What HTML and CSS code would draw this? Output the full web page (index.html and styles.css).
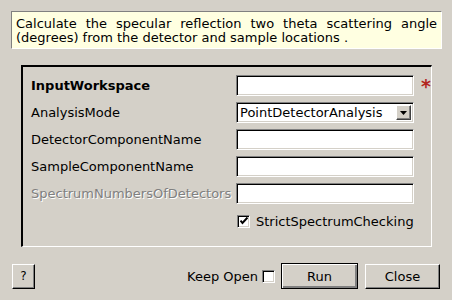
FILE: index.html
```html
<!DOCTYPE html>
<html>
<head>
    <meta charset="utf-8">
    <title>Input Dialog</title>
    <link rel="stylesheet" href="styles.css">
</head>
<body>
    <div class="desc">Calculate the specular reflection two theta scattering angle (degrees) from the detector and sample locations .</div>

    <div class="group">
        <div class="label bold">InputWorkspace</div>
        <div class="field"></div>
        <div class="req">*</div>

        <div class="label">AnalysisMode</div>
        <div class="field combo">
            <span class="combo-text">PointDetectorAnalysis</span>
            <span class="combo-btn"><svg width="7" height="4" viewBox="0 0 7 4"><path d="M0 0h7L3.5 4z" fill="#000"/></svg></span>
        </div>
        <div></div>

        <div class="label">DetectorComponentName</div>
        <div class="field"></div>
        <div></div>

        <div class="label">SampleComponentName</div>
        <div class="field"></div>
        <div></div>

        <div class="label disabled">SpectrumNumbersOfDetectors</div>
        <div class="field"></div>
        <div></div>

        <div></div>
        <div class="check-row">
            <span class="check"><svg width="8" height="8" viewBox="0 0 8 8"><path d="M0.5 3.5l2 2.5l5-5.5" fill="none" stroke="#000" stroke-width="2"/></svg></span>
            <span>StrictSpectrumChecking</span>
        </div>
        <div></div>
    </div>

    <div class="buttons">
        <div class="btn help">?</div>
        <div class="spacer"></div>
        <span class="keep">Keep Open</span>
        <span class="check keep-box"></span>
        <div class="btn run">Run</div>
        <div class="btn close">Close</div>
    </div>
</body>
</html>
```

FILE: styles.css
```css
body {
    margin: 0;
    padding: 11px 11px 0 11px;
    background: #d4d0c8;
    font-family: "DejaVu Sans", sans-serif;
    font-size: 13px;
    color: #000;
}

.desc {
    box-sizing: border-box;
    width: 431px;
    height: 38px;
    padding: 5px 4px 0 4px;
    background: #ffffe1;
    border: 1px solid;
    border-color: #808080 #ffffff #ffffff #808080;
    font-size: 13px;
    line-height: 14px;
    text-align: justify;
}

.group {
    box-sizing: border-box;
    width: 411px;
    height: 182px;
    margin: 16px 0 0 10px;
    padding: 8px 0 0 8px;
    border-style: solid;
    border-width: 2px 1px 1px 2px;
    border-color: #000 #fff #fff #000;
    display: grid;
    grid-template-columns: 205px 178px 16px;
    grid-template-rows: repeat(5, 21px) 20px;
    row-gap: 6px;
}

.label {
    line-height: 21px;
    white-space: nowrap;
}

.bold {
    font-weight: bold;
}

.disabled {
    color: #808080;
    text-shadow: 1px 1px 0 #fff;
}

.field {
    box-sizing: border-box;
    background: #fff;
    border: 1px solid;
    border-color: #808080 #fff #fff #808080;
    box-shadow: inset 1px 1px 0 #000, inset -1px -1px 0 #d4d0c8;
}

.combo {
    display: flex;
    align-items: center;
    padding: 0 2px 0 3px;
}

.combo-text {
    flex: 1;
}

.combo-btn {
    box-sizing: border-box;
    width: 15px;
    height: 15px;
    background: #d4d0c8;
    border: 1px solid;
    border-color: #fff #404040 #404040 #fff;
    box-shadow: inset -1px -1px 0 #808080;
    display: flex;
    align-items: center;
    justify-content: center;
}

.req {
    color: #b3261e;
    font-weight: bold;
    font-size: 19px;
    line-height: 21px;
    padding-left: 7px;
    padding-top: 1px;
}

.check-row {
    display: flex;
    align-items: center;
    gap: 6px;
    padding-left: 1px;
    padding-top: 2px;
}

.check {
    box-sizing: border-box;
    width: 13px;
    height: 13px;
    background: #fff;
    border: 1px solid;
    border-color: #808080 #fff #fff #808080;
    box-shadow: inset 1px 1px 0 #000, inset -1px -1px 0 #d4d0c8;
    display: flex;
    align-items: center;
    justify-content: center;
}

.buttons {
    display: flex;
    align-items: center;
    margin: 16px 1px 0 1px;
}

.spacer {
    flex: 1;
}

.btn {
    box-sizing: border-box;
    height: 25px;
    border: 1px solid;
    border-color: #fff #000 #000 #fff;
    box-shadow: inset -1px -1px 0 #808080;
    display: flex;
    align-items: center;
    justify-content: center;
}

.help {
    width: 23px;
    font-size: 12px;
}

.keep {
    margin-right: 4px;
}

.keep-box {
    margin-right: 6px;
}

.run {
    width: 77px;
    height: 26px;
    border: 1px solid #000;
    box-shadow: inset 1px 1px 0 #fff, inset -2px -2px 0 #808080;
    margin-right: 7px;
}

.close {
    width: 75px;
}
```
